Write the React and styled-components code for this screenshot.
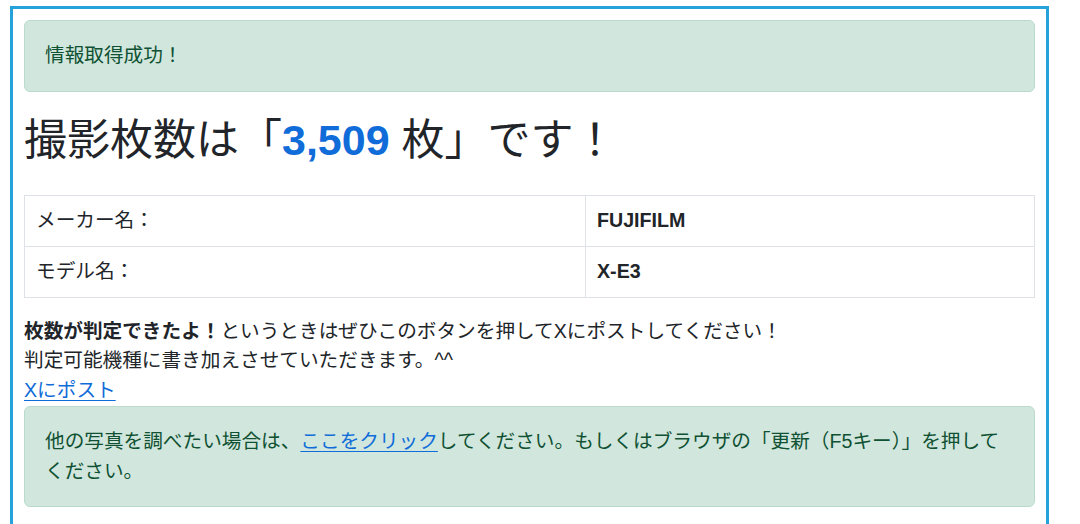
import React from "react";
import styled, { createGlobalStyle } from "styled-components";

const GlobalStyle = createGlobalStyle`
  html, body { margin: 0; padding: 0; background: #ffffff; }
  body {
    font-family: "Liberation Sans", "Noto Sans CJK JP", sans-serif;
    color: #212529;
    font-size: 19.65px;
    line-height: 29.5px;
  }
`;

const Frame = styled.div`
  box-sizing: border-box;
  width: 1039px;
  margin: 6px 0 0 10px;
  border: 3px solid #26a2da;
  padding: 11px 11px 40px;
`;

const Alert = styled.div`
  background: #d1e7dd;
  border: 1px solid #badbcc;
  border-radius: 6px;
  color: #0f5132;
  padding: 20px 20px;
  line-height: 29.5px;
  margin-bottom: ${(p) => p.$mb || 0}px;
`;

const Heading = styled.h1`
  margin: 22px 0 29px;
  font-size: 43px;
  line-height: 52px;
  font-weight: 400;
  color: #212529;
`;

const Count = styled.span`
  color: #106cd8;
  font-weight: 700;
`;

const Table = styled.table`
  width: 100%;
  border-collapse: collapse;
  table-layout: fixed;
`;

const Cell = styled.td`
  border: 1px solid #dee2e6;
  padding: 10.5px 11px 10px;
  line-height: 29.5px;
  font-weight: ${(p) => (p.$bold ? 700 : 400)};
`;

const Note = styled.p`
  margin: 19px 0 1px;
  line-height: 29.5px;
`;

const Strong = styled.strong`
  font-weight: 700;
`;

const Link = styled.a`
  color: #106cd8;
  text-decoration: underline;
  text-underline-offset: 3px;
`;

export default function App() {
  return (
    <>
      <GlobalStyle />
      <Frame>
        <Alert $mb={0}>情報取得成功！</Alert>
        <Heading>
          撮影枚数は「<Count>3,509</Count> 枚」です！
        </Heading>
        <Table>
          <colgroup>
            <col style={{ width: "561px" }} />
            <col />
          </colgroup>
          <tbody>
            <tr>
              <Cell>メーカー名：</Cell>
              <Cell $bold>FUJIFILM</Cell>
            </tr>
            <tr>
              <Cell>モデル名：</Cell>
              <Cell $bold>X-E3</Cell>
            </tr>
          </tbody>
        </Table>
        <Note>
          <Strong>枚数が判定できたよ！</Strong>
          というときはぜひこのボタンを押してXにポストしてください！
          <br />
          判定可能機種に書き加えさせていただきます。^^
          <br />
          <Link href="#">Xにポスト</Link>
        </Note>
        <Alert $mb={20}>
          他の写真を調べたい場合は、<Link href="#">ここをクリック</Link>
          してください。もしくはブラウザの「更新（F5キー）」を押してください。
        </Alert>
      </Frame>
    </>
  );
}
